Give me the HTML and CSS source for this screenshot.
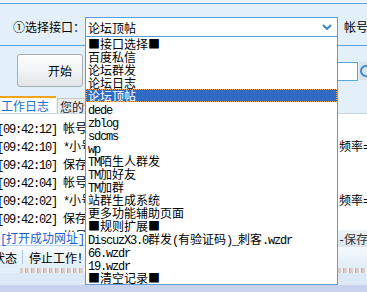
FILE: index.html
```html
<!DOCTYPE html>
<html lang="zh-CN">
<head>
    <meta charset="UTF-8">
    <title>论坛顶帖</title>
    <link rel="stylesheet" href="styles.css">
</head>
<body>
<div class="top-edge"></div>
<div class="row-api">
    <span class="label">①选择接口：</span>
    <div class="select">
        <span>论坛顶帖</span>
        <svg class="chevron" width="10" height="6" viewBox="0 0 10 6"><polyline points="1,1 5,5 9,1" fill="none" stroke="#3d86c9" stroke-width="2"/></svg>
    </div>
    <span class="account">帐号</span>
</div>
<div class="row-start">
    <button class="btn-start">开始</button>
    <input class="num" type="text">
    <span class="spin"><svg width="12" height="18" viewBox="0 0 12 18"><path d="M10 5 A5 5 0 1 0 10 13" fill="none" stroke="#3d86c9" stroke-width="2"/></svg></span>
</div>
<div class="tabs">
    <div class="tab active">工作日志</div>
    <div class="tab">您的记录</div>
</div>
<div class="log">
    <div class="line"><span class="en">[09:42:12] </span>帐号登录成功</div>
    <div class="line"><span class="en">[09:42:10] *</span>小号登录成功，正在按照系统设定的发送间隔执行<span class="en">:</span>频率<span class="en">=30</span>秒</div>
    <div class="line"><span class="en">[09:42:10] </span>保存设置成功</div>
    <div class="line"><span class="en">[09:42:04] </span>帐号登录成功</div>
    <div class="line"><span class="en">[09:42:02] *</span>小号登录成功，正在按照系统设定的发送间隔执行<span class="en">:</span>频率<span class="en">=30</span>秒</div>
    <div class="line"><span class="en">[09:42:02] </span>保存设置成功</div>
    <div class="line"><span class="en">[09:32:25] </span>帐号登录成功</div>
</div>
<div class="log-foot">
    <a class="link"><span class="en">[</span>打开成功网址<span class="en">]</span></a>
    <span class="save"><span class="en">-</span>保存</span>
</div>
<div class="statusbar">
    <span class="state">状态</span>
    <span class="sep"></span>
    <span>停止工作！</span>
</div>
<div class="strip"></div>
<div class="taskbar"></div>

<ul class="options">
    <li>■接口选择■</li>
    <li>百度私信</li>
    <li>论坛群发</li>
    <li>论坛日志</li>
    <li class="selected">论坛顶帖</li>
    <li><span class="en">dede</span></li>
    <li><span class="en">zblog</span></li>
    <li><span class="en">sdcms</span></li>
    <li><span class="en">wp</span></li>
    <li><span class="en">TM</span>陌生人群发</li>
    <li><span class="en">TM</span>加好友</li>
    <li><span class="en">TM</span>加群</li>
    <li>站群生成系统</li>
    <li>更多功能辅助页面</li>
    <li>■规则扩展■</li>
    <li><span class="en">DiscuzX3.0</span>群发<span class="en">(</span>有验证码<span class="en">)_</span>刺客<span class="en">.wzdr</span></li>
    <li><span class="en">66.wzdr</span></li>
    <li><span class="en">19.wzdr</span></li>
    <li>■清空记录■</li>
</ul>
</body>
</html>
```

FILE: styles.css
```css
* {
    box-sizing: border-box;
}
body {
    margin: 0;
    width: 367px;
    height: 292px;
    overflow: hidden;
    position: relative;
    background-color: #e3f0fa;
    color: #000;
    font-family: "Noto Sans CJK SC", "Noto Sans", sans-serif;
    font-size: 12px;
    white-space: nowrap;
}
.en {
    font-family: "Liberation Mono", monospace;
    font-size: 12px;
    letter-spacing: -1.2px;
}
.top-edge {
    height: 3px;
    background-color: #ecf5fc;
}
.row-api {
    display: flex;
    align-items: flex-start;
    height: 43px;
    padding: 13px 0 0 13px;
    border-top: 1px solid #5aa5dc;
    border-bottom: 1px solid #5aa5dc;
}
.label {
    width: 72px;
    line-height: 19px;
    flex-shrink: 0;
}
.select {
    display: flex;
    align-items: center;
    justify-content: space-between;
    flex-shrink: 0;
    width: 253px;
    height: 20px;
    padding: 0 5px 0 2px;
    border: 1px solid #5a9fd6;
    background-color: #fff;
}
.account {
    margin-left: 6px;
    line-height: 19px;
}
.row-start {
    display: flex;
    align-items: flex-start;
    height: 50px;
    padding-top: 8px;
}
.btn-start {
    flex-shrink: 0;
    width: 66px;
    height: 33px;
    margin-left: 17px;
    padding: 0 10px 0 0;
    border: 1px solid #a7adb3;
    border-radius: 3px;
    background: linear-gradient(#fdfdfd, #f1f3f5 50%, #e2e6ea);
    font-family: inherit;
    font-size: 12px;
    text-align: right;
}
.num {
    flex-shrink: 0;
    width: 21px;
    height: 19px;
    margin: 8px 0 0 254px;
    border: 1px solid #5aa5dc;
    background-color: #fff;
}
.spin {
    flex-shrink: 0;
    width: 12px;
    height: 18px;
    margin: 8px 0 0 1px;
    background-color: #d6e4ef;
}
.spin svg {
    display: block;
}
.tabs {
    display: flex;
    align-items: flex-start;
    height: 18px;
    border-bottom: 1px solid #c3d8ea;
}
.tab {
    flex-shrink: 0;
    width: 40px;
    height: 15px;
    margin: 2px 0 0 1px;
    padding-left: 2px;
    border: 1px solid #c8c8c8;
    border-bottom: none;
    background-color: #ececec;
    color: #222;
    line-height: 15px;
}
.tab.active {
    width: 56px;
    height: 17px;
    margin: 0;
    padding-left: 1px;
    border: none;
    border-top: 2px solid #f4a31c;
    background-color: #fff;
    color: #1b6fc6;
}
.log {
    height: 118px;
    padding-top: 6px;
    background-color: #fff;
    overflow: hidden;
}
.line {
    margin-left: -3px;
    line-height: 16px;
}
.log-foot {
    display: flex;
    align-items: center;
    height: 14px;
    border-bottom: 1px solid #b6d4ee;
    background-color: #fff;
}
.link {
    flex-shrink: 0;
    width: 84px;
    color: #1a5fd0;
    line-height: 13px;
}
.save {
    flex-shrink: 0;
    height: 17px;
    margin-left: 254px;
    padding-right: 6px;
    background: linear-gradient(#eef3f8, #dce5ee);
    color: #333;
    line-height: 17px;
}
.statusbar {
    display: flex;
    align-items: center;
    height: 22px;
    background: linear-gradient(#f6fafd, #e2edf8);
}
.state {
    margin-left: -7px;
}
.sep {
    width: 1px;
    height: 14px;
    margin: 0 6px 0 5px;
    background-color: #a9c9e6;
}
.strip {
    height: 5px;
    margin-left: 20px;
    background: repeating-linear-gradient(90deg, #d9cccc 0 3px, #f5efef 3px 5px, #b9abab 5px 6px);
}
.taskbar {
    height: 19px;
    background: linear-gradient(#dde9f6 0 12px, #c8d2ec 12px);
}
.options {
    position: absolute;
    top: 36px;
    left: 85px;
    width: 253px;
    margin: 0;
    padding: 0;
    list-style: none;
    border: 1px solid #5d9cd4;
    background-color: #fff;
}
.options li {
    height: 13px;
    padding-left: 2px;
    line-height: 13px;
}
.options .selected {
    background-color: #316ac5;
    color: #fff;
    outline: 1px dotted #f0a23c;
    outline-offset: -1px;
}
```
